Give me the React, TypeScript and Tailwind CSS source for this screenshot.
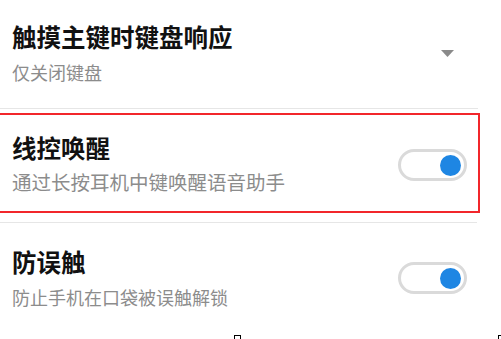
import React from "react";

const font = { fontFamily: '"Noto Sans CJK SC", "Noto Sans", sans-serif' };

function Toggle({ className = "" }: { className?: string }) {
  return (
    <div
      className={
        "relative h-[32px] w-[69px] shrink-0 rounded-full border-[3px] border-[#dadada] bg-white " +
        className
      }
    >
      <div className="absolute right-[3px] top-[2.5px] h-[21px] w-[21px] rounded-full bg-[#1e86e3]" />
    </div>
  );
}

export default function App() {
  return (
    <div className="relative h-[339px] w-[501px] overflow-hidden bg-white" style={font}>
      {/* Row 1 */}
      <div className="flex h-[108px] items-start justify-between pl-[12px] pr-[47px] pt-[21px]">
        <div className="flex flex-col">
          <div className="text-[24.5px] font-semibold leading-[32px] text-[#111111]">触摸主键时键盘响应</div>
          <div className="mt-[6px] text-[18px] leading-[26px] text-[#8c8c8c]">仅关闭键盘</div>
        </div>
        <svg width="13" height="7" viewBox="0 0 13 7" className="mt-[29px]">
          <polygon points="0,0 13,0 6.5,7" fill="#8a8a8a" />
        </svg>
      </div>
      <div className="h-px w-[478px] bg-[#e6e6e6]" />

      {/* Row 2 highlighted */}
      <div className="mt-[4px] flex h-[100px] w-[480px] items-center justify-between border-y-2 border-r-2 border-[#f2262b] pl-[12px] pr-[11px]">
        <div className="flex flex-col">
          <div className="text-[24.5px] font-semibold leading-[32px] text-[#111111]">线控唤醒</div>
          <div className="mt-[5px] text-[19.5px] leading-[26px] text-[#8c8c8c]">通过长按耳机中键唤醒语音助手</div>
        </div>
        <Toggle className="mt-[4px]" />
      </div>
      <div className="mt-[9px] h-px w-[477px] bg-[#e6e6e6]" />

      {/* Row 3 */}
      <div className="flex items-start justify-between pl-[12px] pr-[34px] pt-[23px]">
        <div className="flex flex-col">
          <div className="text-[24.5px] font-semibold leading-[32px] text-[#111111]">防误触</div>
          <div className="mt-[6px] text-[18px] leading-[26px] text-[#8c8c8c]">防止手机在口袋被误触解锁</div>
        </div>
        <Toggle className="mt-[16px]" />
      </div>

      {/* capture marks */}
      <div className="absolute left-[234px] top-[335px] h-[5px] w-[7px] border-x border-t border-black" />
      <div className="absolute left-[498px] top-[335px] h-[5px] w-[5px] border-l border-t border-black" />
    </div>
  );
}
